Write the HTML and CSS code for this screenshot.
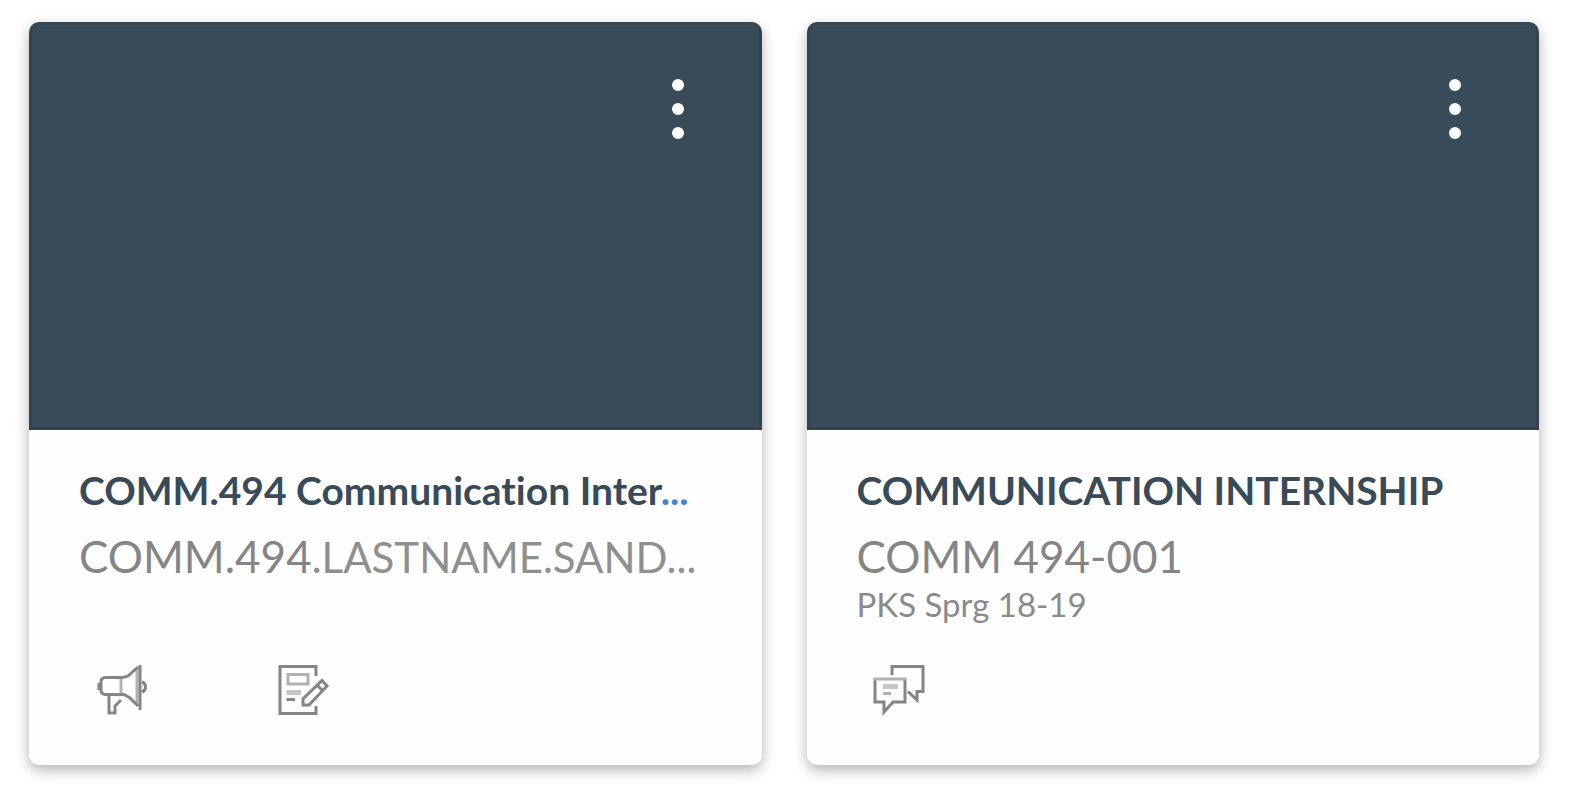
FILE: index.html
```html
<!DOCTYPE html>
<html lang="en">
<head>
    <meta charset="UTF-8">
    <meta name="viewport" content="width=device-width, initial-scale=1.0">
    <title>Dashboard</title>
    <link rel="stylesheet" href="styles.css">
</head>
<body>

    <main class="dashboard">
        <article class="card">
            <div class="card-hero">
                <button class="menu-button" type="button" aria-label="Course options">
                    <svg viewBox="0 0 48 92" width="48" height="92">
                        <circle cx="24" cy="22" r="6"/>
                        <circle cx="24" cy="46" r="6"/>
                        <circle cx="24" cy="70" r="6"/>
                    </svg>
                </button>
            </div>
            <div class="card-body">
                <h2 class="card-title"><a href="#">COMM.494 Communication Inter<span class="more">...</span></a></h2>
                <p class="card-code">COMM.494<span class="card-section">.LASTNAME.SAND...</span></p>
            </div>
            <nav class="card-actions">
                <a class="action" href="#" aria-label="Announcements">
                    <svg class="icon" viewBox="0 0 54 54">
                        <path class="light" d="M27 16v17M43 7v35"/>
                        <path d="M29 15.500H11Q7 16 7 20V28Q7 32 11 32.500H30L36 36L44 44M29 15.500L34 14L44 5M46 3v45M5 21v7M48 20Q51.500 21 51.500 25T48 30"/>
                        <path d="M15 34v17h6v-7l6-6"/>
                    </svg>
                </a>
                <a class="action" href="#" aria-label="Assignments">
                    <svg class="icon" viewBox="0 0 54 54">
                        <path d="M39 14V4.500H3V51.500H39V44"/>
                        <path class="light" d="M11 12.500H31V22H11z"/>
                        <path class="pale" d="M9.500 30.500H24"/>
                        <path d="M9.500 37.500H18"/>
                        <path d="M45 18.500L50 24L32 43H26V37zM40 23L46 29"/>
                    </svg>
                </a>
            </nav>
        </article>

        <article class="card">
            <div class="card-hero">
                <button class="menu-button" type="button" aria-label="Course options">
                    <svg viewBox="0 0 48 92" width="48" height="92">
                        <circle cx="24" cy="22" r="6"/>
                        <circle cx="24" cy="46" r="6"/>
                        <circle cx="24" cy="70" r="6"/>
                    </svg>
                </button>
            </div>
            <div class="card-body">
                <h2 class="card-title"><a href="#">COMMUNICATION INTERNSHIP</a></h2>
                <p class="card-code">COMM 494-001</p>
                <p class="card-term">PKS Sprg 18-19</p>
            </div>
            <nav class="card-actions">
                <a class="action" href="#" aria-label="Discussions">
                    <svg class="icon" viewBox="0 0 54 54">
                        <path d="M21 13V4.500H52V29.500H46V38L37 29.500"/>
                        <path d="M4 16V40H13V50L22 40H34V16"/>
                        <path class="light" d="M3 17H35"/>
                        <path class="pale" d="M12 24.500H27"/>
                        <path class="light" d="M12 31.500H20"/>
                    </svg>
                </a>
            </nav>
        </article>
    </main>

</body>
</html>
```
FILE: styles.css
```css
* {
    box-sizing: border-box;
}
body {
    margin: 0;
    background-color: #ffffff;
    font-family: Lato, "Liberation Sans", sans-serif;
    font-variant-ligatures: none;
}
.dashboard {
    display: grid;
    grid-template-columns: 1fr 1fr;
    gap: 45px;
    padding: 22px 30px 26px 29px;
}
.card {
    display: flex;
    flex-direction: column;
    min-width: 0;
    background-color: #fefefe;
    border-radius: 10px;
    box-shadow: 0 5px 14px rgba(0, 0, 0, 0.3);
}
.card-hero {
    display: flex;
    justify-content: flex-end;
    align-items: flex-start;
    height: 408px;
    padding: 38px 57px 0 0;
    background-color: #394b58;
    border: 3px solid #33424f;
    border-top-color: #364652;
    border-radius: 10px 10px 0 0;
}
.menu-button {
    padding: 0;
    border: none;
    background: none;
    cursor: pointer;
}
.menu-button svg {
    display: block;
    fill: #ffffff;
}
.card-body {
    padding: 34px 50px 0;
    white-space: nowrap;
}
.card-title {
    margin: 0;
    font-size: 39px;
    line-height: 52px;
    font-weight: 700;
}
.card-title a {
    color: #394b58;
    text-decoration: none;
}
.card-title .more {
    color: #4585cb;
}
.card-code {
    margin: 14px 0 0;
    font-size: 44px;
    line-height: 52px;
    color: #858585;
}
.card-section {
    font-size: 42px;
    color: #8f8f8e;
}
.card-term {
    margin: 0;
    font-size: 33px;
    line-height: 44px;
    color: #8b8b8b;
}
.card-actions {
    display: grid;
    grid-template-columns: repeat(4, 1fr);
    margin-top: auto;
    padding: 36px 0 49px;
}
.action {
    display: flex;
    justify-content: center;
}
.icon {
    width: 54px;
    height: 54px;
    fill: none;
    stroke: #858585;
    stroke-width: 3;
}
.icon .light {
    stroke: #b2b2b2;
}
.icon .pale {
    stroke: #c6c6c6;
    stroke-width: 5;
}
```
